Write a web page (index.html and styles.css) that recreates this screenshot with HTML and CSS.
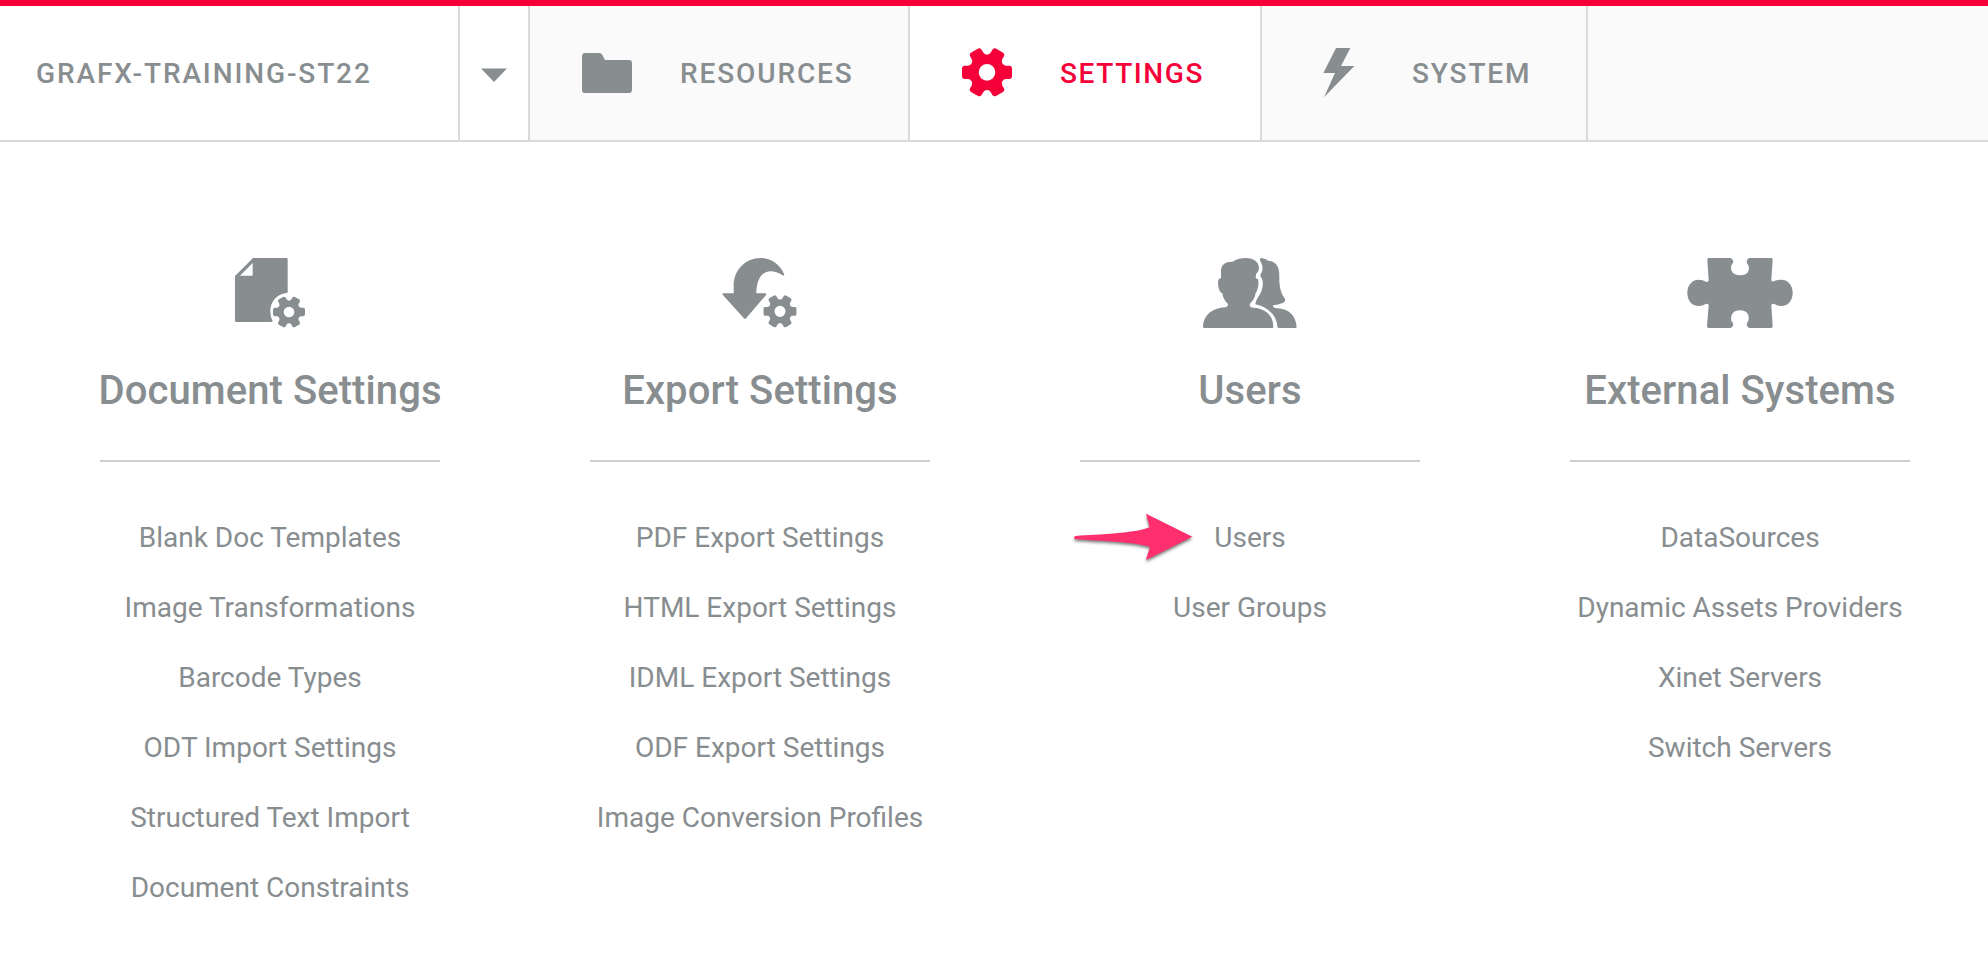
FILE: index.html
```html
<!DOCTYPE html>
<html lang="en">
<head>
<meta charset="utf-8">
<title>Settings</title>
<link rel="stylesheet" href="styles.css">
</head>
<body>
<svg class="defs" aria-hidden="true">
  <symbol id="gear" viewBox="-75 -75 150 150">
    <path fill-rule="evenodd" d="M46-26.5Q50-20 57-20L67-20Q75-19 75-11L75 11Q75 19 67 20L57 20Q50 20 46 26.5Q42.3 33.3 45.8 39.4L50.8 48Q54 55.5 47 59.5L28 70.5Q21 74.5 16.2 68L11.2 59.4Q7.7 53.3 0 53Q-7.7 53.3-11.2 59.4L-16.2 68Q-21 74.5-28 70.5L-47 59.5Q-54 55.5-50.8 48L-45.8 39.4Q-42.3 33.3-46 26.5Q-50 20-57 20L-67 20Q-75 19-75 11L-75-11Q-75-19-67-20L-57-20Q-50-20-46-26.5Q-42.3-33.3-45.8-39.4L-50.8-48Q-54-55.5-47-59.5L-28-70.5Q-21-74.5-16.2-68L-11.2-59.4Q-7.7-53.3 0-53Q7.7-53.3 11.2-59.4L16.2-68Q21-74.5 28-70.5L47-59.5Q54-55.5 50.8-48L45.8-39.4Q42.3-33.3 46-26.5ZM25 0A25 25 0 1 0-25 0A25 25 0 1 0 25 0Z"/>
  </symbol>
</svg>
<header class="topbar">
  <div class="env">GRAFX-TRAINING-ST22</div>
  <button class="env-toggle" aria-label="Switch environment">
    <svg width="26" height="14" viewBox="0 0 26 14"><path d="M0 .5H26L13 14Z"/></svg>
  </button>
  <nav class="tabs">
    <a class="tab tab-resources">
      <svg class="tab-icon" viewBox="0 0 192 186"><path d="M31 33H73Q79 33 82 39L90 54H161Q171 54 171 64V143Q171 153 161 153H31Q21 153 21 143V43Q21 33 31 33Z"/></svg>
      <span>RESOURCES</span>
    </a>
    <a class="tab tab-settings active">
      <svg class="tab-icon" viewBox="0 0 192 186"><use href="#gear" x="21" y="16" width="150" height="150"/></svg>
      <span>SETTINGS</span>
    </a>
    <a class="tab tab-system">
      <svg class="tab-icon" viewBox="0 0 192 186"><path d="M87 18H130L102 72H142L51 166L84 93H49Z"/></svg>
      <span>SYSTEM</span>
    </a>
  </nav>
</header>
<main class="columns">
  <section class="column">
    <svg class="icon" width="100" height="95" viewBox="0 0 300 285">
      <path fill-rule="evenodd" d="M99 39H199Q203 39 203 43V143C170 146 151 170 151 198Q151 216 158 228Q158 231 154 231H49Q45 231 45 227V93ZM98 54L60 92H95Q98 92 98 89Z"/>
      <use href="#gear" x="159" y="153" width="96" height="96"/>
    </svg>
    <h2>Document Settings</h2>
    <ul>
      <li>Blank Doc Templates</li>
      <li>Image Transformations</li>
      <li>Barcode Types</li>
      <li>ODT Import Settings</li>
      <li>Structured Text Import</li>
      <li>Document Constraints</li>
    </ul>
  </section>
  <section class="column">
    <svg class="icon" width="100" height="95" viewBox="0 0 300 285">
      <path d="M71 145V122C71 75 107 39 152 39C184 39 212 60 223 89Q222 93 218 91C175 63 139 83 139 145H167Q170 147 168 150L107 221Q105 222 103 221L38 149Q36 145 40 145Z"/>
      <use href="#gear" x="160" y="149" width="100" height="100"/>
    </svg>
    <h2>Export Settings</h2>
    <ul>
      <li>PDF Export Settings</li>
      <li>HTML Export Settings</li>
      <li>IDML Export Settings</li>
      <li>ODF Export Settings</li>
      <li>Image Conversion Profiles</li>
    </ul>
  </section>
  <section class="column">
    <svg class="icon" width="120" height="95" viewBox="0 0 360 285">
      <path d="M93 99V76C94 58 107 49 128 50C143 41 154 39 166 39C190 39 206 49 207 69C207 76 203 82 198 88L197 98Q198 102 204 102C208 118 203 135 197 145C194 159 189 168 182 173Q177 179 181 185Q184 188 191 188C222 190 250 208 250 246Q250 249 246 249H43Q39 249 39 245C41 206 72 189 105 187Q115 185 114 177Q100 166 97 145C87 143 82 119 85 104Q88 101 93 99Z"/>
      <path d="M212 39C220 39 228 42 234 47C256 48 268 63 268 90C267 125 272 145 285 161Q287 169 280 173Q265 179 249 181Q248 188 261 190C297 192 317 211 320 246Q320 249 316 249H266Q262 249 262 244C260 208 230 185 196 178C197 168 202 161 206 154C216 141 222 116 216 101C213 96 211 93 211 89C218 79 220 66 214 54C209 48 209 42 212 39Z"/>
    </svg>
    <h2>Users</h2>
    <ul>
      <li class="pointed">
        <svg class="pointer" width="130" height="55" viewBox="30 210 390 165"><path d="M48 288C120 283 225 280 269 262L258 221L397 290L258 360L270 321C225 306 120 303 48 298Q42 297 42 293Q42 288 48 288Z"/></svg>
        Users
      </li>
      <li>User Groups</li>
    </ul>
  </section>
  <section class="column">
    <svg class="icon" width="130" height="95" viewBox="0 0 390 285">
      <path d="M101 39H166Q174 41 175 50Q174 55 169 61C165 79 175 91 195 91C216 91 226 79 220 61Q215 55 215 50Q216 41 223 39H289Q293 39 293 44L289 105Q290 111 296 109C303 105 311 104 319 104C340 104 353 122 353 143C353 166 340 183 319 183C310 183 303 180 298 177Q291 174 289 180L293 243Q293 249 288 249H223Q216 247 215 238Q216 232 220 228C225 209 215 196 195 196C175 196 166 209 169 228Q174 232 175 238Q174 247 166 249H101Q96 249 96 243L101 180Q99 174 92 177C86 181 79 183 71 183C50 183 37 166 37 143C37 122 50 104 71 104C79 104 87 106 93 110Q99 113 101 106L97 44Q97 39 101 39Z"/>
    </svg>
    <h2>External Systems</h2>
    <ul>
      <li>DataSources</li>
      <li>Dynamic Assets Providers</li>
      <li>Xinet Servers</li>
      <li>Switch Servers</li>
    </ul>
  </section>
</main>
</body>
</html>
```
FILE: styles.css
```css
* {
  box-sizing: border-box;
}

body {
  margin: 0;
  background: #fff;
  color: #888d90;
  fill: currentColor;
  font-family: Roboto, sans-serif;
  font-size: 28px;
}

.defs {
  display: none;
}

.topbar {
  display: flex;
  height: 142px;
  border-top: 6px solid #f50038;
  border-bottom: 2px solid #dadada;
  background: #fafafa;
  font-weight: 500;
  letter-spacing: 1.88px;
}

.env,
.env-toggle,
.tab {
  display: flex;
  align-items: center;
  border-right: 2px solid #dadada;
}

.env {
  width: 460px;
  padding-left: 36px;
  background: #fff;
}

.env-toggle {
  justify-content: center;
  width: 70px;
  padding: 4px 0 0;
  border-width: 0 2px 0 0;
  background: #fff;
  color: inherit;
}

.tabs {
  display: flex;
}

.tab {
  gap: 41px;
  padding-left: 45px;
}

.tab-icon {
  width: 64px;
  height: 62px;
}

.tab-resources {
  width: 380px;
}

.tab-settings {
  width: 352px;
  letter-spacing: 1.6px;
}

.tab-system {
  width: 326px;
}

.active {
  background: #fff;
  color: #f50038;
}

.columns {
  display: grid;
  grid-template-columns: repeat(4, 340px);
  column-gap: 150px;
  padding: 103px 0 0 100px;
}

.column {
  display: flex;
  flex-direction: column;
  align-items: center;
}

h2 {
  margin: 21px 0 39px;
  font-size: 40px;
  font-weight: 500;
  line-height: 60px;
  letter-spacing: 0.08px;
  white-space: nowrap;
}

ul {
  width: 340px;
  margin: 0;
  padding: 41px 0 0;
  border-top: 2px solid #cfcfcf;
  list-style: none;
  text-align: center;
}

li {
  line-height: 70px;
  white-space: nowrap;
}

.pointed {
  position: relative;
}

.pointer {
  position: absolute;
  top: 7px;
  left: -10px;
  color: #ff2e6c;
  filter: drop-shadow(0 2px 1.5px rgba(0, 0, 0, 0.5));
}
```
